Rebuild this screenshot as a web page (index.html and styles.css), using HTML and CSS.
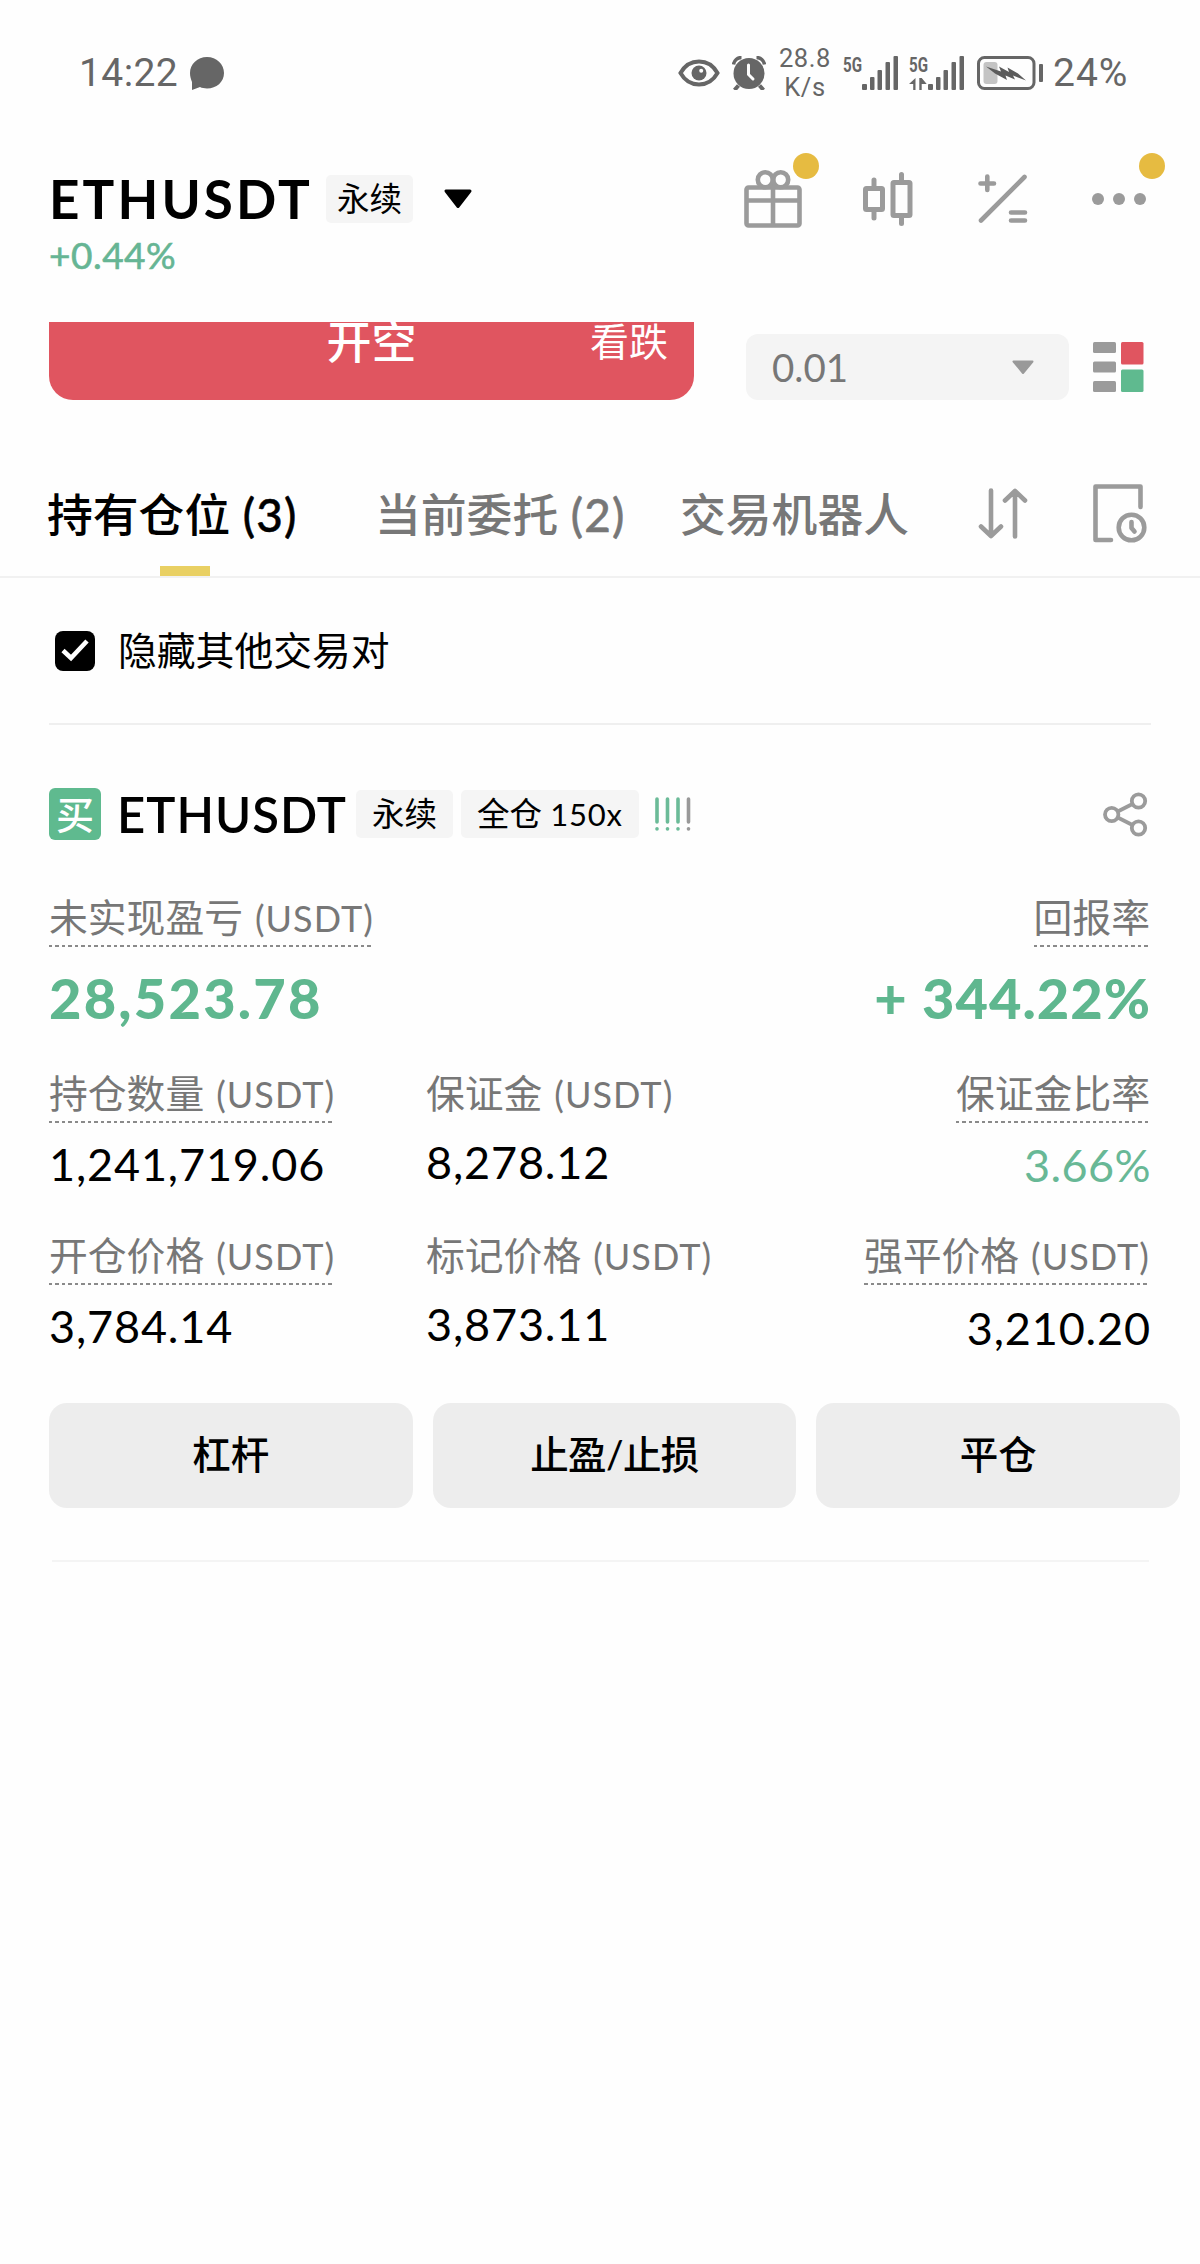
FILE: index.html
```html
<!DOCTYPE html>
<html lang="zh-CN">
<head>
<meta charset="utf-8">
<title>ETHUSDT 永续</title>
<link rel="stylesheet" href="styles.css">
</head>
<body>
<div class="statusbar">
  <span class="clock">14:22</span>
  <svg class="bubble" width="34" height="34" viewBox="0 0 34 34"><path d="M17 1C26.500 1 34 8 34 17s-7.500 15.500-17 15.500c-2.600 0-5-.4-7-1.400L2 34V26C.8 23 0 20.300 0 17 0 8 7.500 1 17 1z" fill="#666"/></svg>
  <span class="grow"></span>
  <svg class="eye" width="42" height="28" viewBox="0 0 42 28"><path d="M2.500 14C7 6 14 2.500 21 2.500S35 6 39.500 14C35 22 28 25.500 21 25.500S7 22 2.500 14z" fill="none" stroke="#666" stroke-width="4"/><circle cx="21" cy="14" r="7.500" fill="#666"/><circle cx="23.200" cy="11.800" r="2" fill="#fefefe"/></svg>
  <svg class="alarm" width="34" height="34" viewBox="0 0 34 34"><circle cx="17" cy="17.500" r="15.500" fill="#666"/><path d="M1.500 8.500A8 8 0 0 1 9.500 1.500M32.500 8.500a8 8 0 0 0-8-7" fill="none" stroke="#666" stroke-width="3.500"/><path d="M6.500 29.500 2.500 34M27.500 29.500l4 4.500" stroke="#666" stroke-width="4"/><path d="M16.500 9v9.500l4.500 4.500" fill="none" stroke="#fefefe" stroke-width="3" stroke-linecap="round"/></svg>
  <span class="speed"><span>28.8</span><span>K/s</span></span>
  <svg class="signal" width="56" height="34" viewBox="0 0 56 34"><text x="0" y="15.500" class="net" textLength="19" lengthAdjust="spacingAndGlyphs">5G</text><g fill="#666"><rect x="19" y="28" width="5" height="6" rx="1"/><rect x="27" y="21" width="4.500" height="13" rx="1"/><rect x="34.500" y="14" width="4.500" height="20" rx="1"/><rect x="42.500" y="6" width="4.500" height="28" rx="1"/><rect x="50.500" y="0" width="4.500" height="34" rx="1"/></g></svg>
  <svg class="signal second" width="56" height="34" viewBox="0 0 56 34"><text x="0" y="15.500" class="net" textLength="19" lengthAdjust="spacingAndGlyphs">5G</text><g fill="#666"><path d="M6.500 22v12H4.200v-6H0zM10.300 22h2.400l5 6h-5v6h-2.400z"/><rect x="19" y="28" width="5" height="6" rx="1"/><rect x="27" y="21" width="4.500" height="13" rx="1"/><rect x="34.500" y="14" width="4.500" height="20" rx="1"/><rect x="42.500" y="6" width="4.500" height="28" rx="1"/><rect x="50.500" y="0" width="4.500" height="34" rx="1"/></g></svg>
  <svg class="battery" width="67" height="34" viewBox="0 0 67 34"><rect x="1.500" y="1.500" width="55.500" height="31" rx="6" fill="none" stroke="#666" stroke-width="3"/><rect x="6.500" y="6" width="14" height="22" rx="3" fill="#c4c4c4"/><path d="M9 10.500 24 15.500 22 10.500 32 16 30.500 11.500 41 17.500 49 24.500 36 19.500 38 23.500 28.500 19.500 30 24 18 17.500z" fill="#5c5c5c"/><rect x="62" y="8" width="4" height="18" rx="1" fill="#666"/></svg>
  <span class="pct">24%</span>
</div>

<header class="header">
  <div class="pair">
    <div class="pair-row">
      <h1>ETHUSDT</h1>
      <span class="tag">永续</span>
      <svg class="caret" width="30" height="20" viewBox="0 0 30 20"><path d="M3 2h24L15 17.500z" stroke="#000" stroke-width="3" stroke-linejoin="round"/></svg>
    </div>
    <div class="change">+0.44%</div>
  </div>
  <nav class="tools">
    <span class="tool"><svg width="58" height="58" viewBox="0 0 58 58" fill="none" stroke="#9b9b9b" stroke-width="4.600"><rect x="2.500" y="17.500" width="53" height="38" rx="2"/><path d="M2.500 30.500h53M29 4v52"/><circle cx="21.300" cy="9.800" r="7.500"/><circle cx="36.700" cy="9.800" r="7.500"/></svg><i class="dot gift-dot"></i></span>
    <span class="tool"><svg width="50" height="54" viewBox="0 0 50 54" fill="none" stroke="#9b9b9b" stroke-width="5" stroke-linecap="round"><rect x="2.500" y="16.500" width="17" height="21" rx="1"/><rect x="30" y="10.500" width="17" height="33" rx="1"/><path d="M11 8v8M11 38v8M38.500 2.500v8M38.500 44v7.500"/></svg></span>
    <span class="tool"><svg width="50" height="50" viewBox="0 0 50 50" fill="none" stroke="#9b9b9b" stroke-width="4.600" stroke-linecap="round"><path d="M3 46.500 46.500 3M2.500 9.500h13.500M9.300 2.500v13.500M33 38.500h14M33 46.500h14"/></svg></span>
    <span class="tool"><svg width="54" height="12" viewBox="0 0 54 12" fill="#9b9b9b"><circle cx="6" cy="6" r="6"/><circle cx="27" cy="6" r="6"/><circle cx="48" cy="6" r="6"/></svg><i class="dot more-dot"></i></span>
  </nav>
</header>

<section class="trade">
  <div class="short"><span class="short-main">开空</span><span class="short-side">看跌</span></div>
  <div class="step"><span>0.01</span><svg width="24" height="15" viewBox="0 0 24 15"><path d="M2.500 1.500h19L12 13z" fill="#999" stroke="#999" stroke-width="2" stroke-linejoin="round"/></svg></div>
  <svg class="book" width="51" height="50" viewBox="0 0 51 50"><g fill="#9b9b9b"><rect width="23" height="11" rx="1.500"/><rect y="19.500" width="23" height="11" rx="1.500"/><rect y="39" width="23" height="11" rx="1.500"/></g><rect x="28" width="22.500" height="22.500" rx="1.500" fill="#e05560"/><rect x="28" y="27.500" width="22.500" height="22.500" rx="1.500" fill="#5fba8f"/></svg>
</section>

<nav class="tabs">
  <a class="tab active">持有仓位 <span>(3)</span></a>
  <a class="tab">当前委托 <span>(2)</span></a>
  <a class="tab">交易机器人</a>
  <svg class="sort" width="50" height="51" viewBox="0 0 50 51" fill="none" stroke="#9b9b9b" stroke-width="4.600" stroke-linecap="round" stroke-linejoin="round"><path d="M13 2.500v45M3 38.500l10 9.500 10-9.500M37 48.500V3.500M27 12.500 37 3l10 9.500"/></svg>
  <svg class="history" width="54" height="59" viewBox="0 0 54 59" fill="none" stroke="#9b9b9b" stroke-width="4.600" stroke-linecap="round" stroke-linejoin="round"><path d="M18 56H2.500V2.500h45V23"/><circle cx="38.500" cy="43.500" r="12.800"/><path d="M38.500 38v6l3 3.500"/></svg>
</nav>

<main>
  <div class="filter">
    <svg width="40" height="40" viewBox="0 0 40 40"><rect width="40" height="40" rx="8"/><path d="M8 19.500l8 7.500L32 10" fill="none" stroke="#fff" stroke-width="4.600"/></svg>
    <span>隐藏其他交易对</span>
  </div>

  <article class="position">
    <div class="head">
      <span class="side">买</span>
      <h2>ETHUSDT</h2>
      <span class="tag">永续</span>
      <span class="tag lever">全仓 <span>150x</span></span>
      <svg class="risk" width="36" height="34" viewBox="0 0 36 34" stroke-width="3.600" stroke-linecap="round"><path d="M2 2v23M2 31.800v.2M12.500 2v23M12.500 31.800v.2M23 2v23M23 31.800v.2" stroke="#6bbb98"/><path d="M33.500 2v23M33.500 31.800v.2" stroke="#999"/></svg>
      <svg class="share" width="45" height="45" viewBox="0 0 45 45" fill="none" stroke="#9b9b9b" stroke-width="3.800"><circle cx="8.700" cy="22.500" r="6.700"/><circle cx="35.500" cy="9" r="6.700"/><circle cx="35.500" cy="36" r="6.700"/><path d="M14.700 19.500 29.500 12M14.700 25.500 29.500 33"/></svg>
    </div>

    <div class="summary">
      <div class="cell"><span class="label dashed">未实现盈亏 <span>(USDT)</span></span><span class="big">28,523.78</span></div>
      <div class="cell right"><span class="label dashed">回报率</span><span class="big roi">+ 344.22%</span></div>
    </div>

    <div class="stats">
      <div class="cell"><span class="label dashed">持仓数量 <span>(USDT)</span></span><span class="value">1,241,719.06</span></div>
      <div class="cell mid"><span class="label">保证金 <span>(USDT)</span></span><span class="value">8,278.12</span></div>
      <div class="cell right"><span class="label dashed">保证金比率</span><span class="value green">3.66%</span></div>
      <div class="cell"><span class="label dashed">开仓价格 <span>(USDT)</span></span><span class="value">3,784.14</span></div>
      <div class="cell mid"><span class="label">标记价格 <span>(USDT)</span></span><span class="value">3,873.11</span></div>
      <div class="cell right"><span class="label dashed">强平价格 <span>(USDT)</span></span><span class="value">3,210.20</span></div>
    </div>

    <div class="actions">
      <button>杠杆</button>
      <button>止盈/止损</button>
      <button>平仓</button>
    </div>
  </article>
</main>
</body>
</html>
```

FILE: styles.css
```css
* { box-sizing: border-box; }

body {
  margin: 0;
  width: 1200px;
  min-height: 2264px;
  background: #fefefe;
  color: #000;
  font-family: Lato, "Noto Sans CJK SC", sans-serif;
}

svg { display: block; flex: none; }
h1, h2 { margin: 0; }

/* Status bar */
.statusbar {
  display: flex;
  align-items: center;
  height: 146px;
  padding: 0 73px 0 79px;
  color: #666;
  font-family: Roboto, sans-serif;
}
.clock { font-size: 39px; line-height: 46px; letter-spacing: 0.4px; width: 111px; }
.grow { flex: 1; }
.alarm { margin-left: 12px; }
.speed {
  display: flex;
  flex-direction: column;
  align-items: center;
  width: 54px;
  margin: 0 11px 0 12px;
  font-size: 25.5px;
  line-height: 29px;
  letter-spacing: 0.6px;
}
.signal { overflow: visible; }
.net { font: bold 20.5px Roboto, sans-serif; fill: #666; }
.signal.second { margin-left: 10px; }
.battery { margin-left: 12px; }
.pct { width: 74px; margin-left: 9px; font-size: 39px; line-height: 46px; letter-spacing: 1px; white-space: nowrap; }

/* Pair header */
.header {
  display: flex;
  justify-content: space-between;
  height: 176px;
  padding: 23px 52px 0 49px;
}
.pair-row { display: flex; align-items: center; height: 60px; }
h1 { width: 277px; font-size: 53px; line-height: 60px; font-weight: 700; letter-spacing: 3.100px; }
.tag {
  height: 48px;
  padding: 0 11px;
  border-radius: 5px;
  background: #f5f5f5;
  font-size: 32.500px;
  line-height: 48px;
  white-space: nowrap;
}
.caret { margin-left: 30px; }
.change {
  margin-top: 6px;
  color: #66b594;
  font-size: 37px;
  line-height: 40px;
  letter-spacing: 0.5px;
  -webkit-text-stroke: 0.6px #66b594;
}
.tools { display: flex; align-items: center; gap: 65px; height: 60px; }
.tool { position: relative; }
.tool:first-child { margin-right: -4px; }
.tool:last-child { margin: 0 2px 0 -1px; }
.dot { position: absolute; width: 26px; height: 26px; border-radius: 50%; background: #e6bb41; }
.gift-dot { left: 49px; top: -17px; }
.more-dot { left: 47px; top: -40px; }

/* Order strip, partly scrolled under the header */
.trade { display: flex; height: 78px; padding-left: 49px; }
.short {
  display: grid;
  grid-template-columns: 1fr auto 1fr;
  align-items: start;
  width: 645px;
  padding-right: 26px;
  border-radius: 0 0 24px 24px;
  background: #e05560;
  color: #fff;
  overflow: hidden;
}
.short-main { grid-column: 2; margin: -12px -26px 0 0; font-size: 45px; line-height: 64px; font-weight: 500; }
.short-side { justify-self: end; margin-top: -9px; font-size: 39px; line-height: 56px; }
.step {
  display: flex;
  align-items: center;
  justify-content: space-between;
  width: 323px;
  height: 66px;
  margin: 12px 24px 0 52px;
  padding: 0 34px 0 26px;
  border-radius: 12px;
  background: #f4f4f4;
  color: #777;
  font-size: 38.500px;
}
.book { margin-top: 20px; }

/* Tabs */
.tabs {
  display: flex;
  align-items: center;
  height: 178px;
  padding: 50px 53px 0 47px;
  border-bottom: 2px solid #f1f1f1;
}
.tab {
  position: relative;
  height: 126px;
  line-height: 129px;
  font-size: 45.800px;
  font-weight: 500;
  color: #777;
  white-space: nowrap;
  word-spacing: 1px;
}
.tab span { letter-spacing: 1.200px; -webkit-text-stroke: 0.5px currentColor; }
.tab.active { color: #000; }
.tab.active::after {
  content: "";
  position: absolute;
  left: 113px;
  bottom: 0;
  width: 50px;
  height: 10px;
  background: #e9d063;
}
.tab:nth-child(1) { width: 328px; }
.tab:nth-child(2) { width: 305px; }
.tab:nth-child(3) { width: 298px; }
.history { margin-left: 65px; }

/* Filter */
.filter {
  display: flex;
  align-items: center;
  gap: 23px;
  height: 147px;
  margin: 0 49px;
  padding-left: 6px;
  border-bottom: 2px solid #efefef;
  font-size: 38.800px;
}
.filter span { line-height: 48px; margin-top: -2px; }

/* Position card */
.position { margin: 0 50px 0 49px; padding-top: 63px; }
.head { display: flex; align-items: center; height: 52px; }
.side {
  width: 52px;
  height: 52px;
  border-radius: 6px;
  background: #5fba8f;
  color: #fff;
  font-size: 38px;
  line-height: 52px;
  text-align: center;
  font-weight: 500;
}
h2 { width: 239px; margin-left: 16px; font-size: 49px; line-height: 53px; font-weight: 600; letter-spacing: 1px; }
.head .tag { padding: 0 16px; }
.head .lever { margin-left: 8px; }
.lever span { font-size: 31px; letter-spacing: 0.700px; }
.risk { margin-left: 16px; }
.share { margin-left: auto; margin-right: 2px; }

.cell { display: flex; flex-direction: column; align-items: flex-start; }
.right { align-items: flex-end; }
.label {
  height: 54px;
  font-size: 38.800px;
  line-height: 48px;
  color: #777;
  white-space: nowrap;
  word-spacing: 2px;
}
.label span { font-size: 36px; letter-spacing: 1.050px; }
.dashed {
  background: repeating-linear-gradient(90deg, #8a8a8a 0 3.500px, transparent 3.500px 6.500px) left bottom / 100% 2px no-repeat;
}
.summary { display: flex; justify-content: space-between; height: 176px; margin-top: 53px; }
.big { margin-top: 21px; color: #5fb78f; font-size: 56px; line-height: 60px; font-weight: 900; letter-spacing: 2.200px; }
.roi { margin-right: -1px; letter-spacing: 1px; }
.stats {
  display: grid;
  grid-template-columns: 377px 1fr auto;
  grid-auto-rows: 162px;
}
.value { margin-top: 18px; font-size: 45px; line-height: 46px; letter-spacing: 0.850px; }
.mid .value { margin-top: 16px; }
.right .value { margin: 20px -1px 0 0; }
.right .green { margin-top: 19px; color: #68b896; letter-spacing: 0.400px; }

.actions {
  display: grid;
  grid-template-columns: repeat(3, 1fr);
  gap: 20px;
  height: 159px;
  margin: 10px -30px 0 0;
  padding-bottom: 54px;
}
.actions button {
  border: 0;
  border-radius: 18px;
  padding: 0 0 3px;
  background: #ededed;
  color: #000;
  font: 500 38.500px/1 Lato, "Noto Sans CJK SC", sans-serif;
}
.actions button:nth-child(2) { letter-spacing: -0.600px; }
.position::after { content: ""; display: block; height: 2px; margin: -2px 1px 0 3px; background: #f4f4f4; }
```
